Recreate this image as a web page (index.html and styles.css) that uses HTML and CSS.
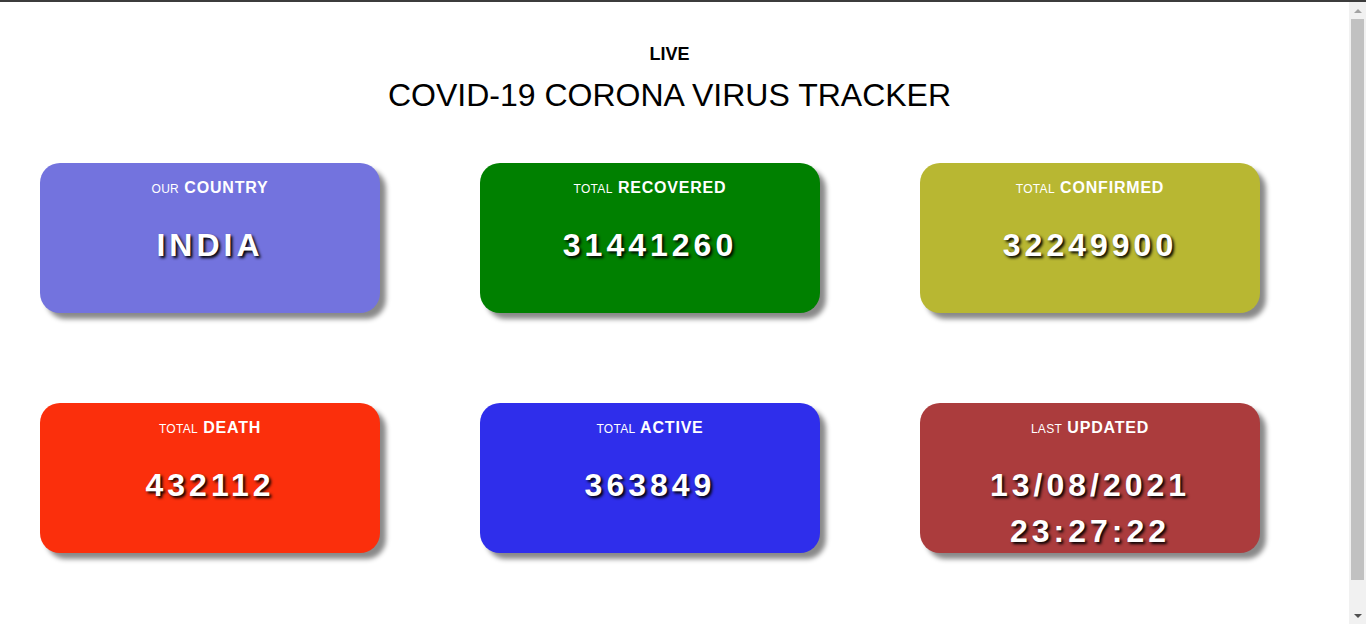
FILE: index.html
```html
<!DOCTYPE html>
<html lang="en">
<head>
<meta charset="utf-8">
<title>Covid-19 Corona Virus Tracker</title>
<link rel="stylesheet" href="styles.css">
</head>
<body>
<div class="page">
  <header class="header">
    <h3 class="live">LIVE</h3>
    <h1 class="title">COVID-19 CORONA VIRUS TRACKER</h1>
  </header>
  <main class="grid">
    <section class="card c-country">
      <p class="label"><span class="small">our</span> COUNTRY</p>
      <p class="value">INDIA</p>
    </section>
    <section class="card c-recovered">
      <p class="label"><span class="small">total</span> RECOVERED</p>
      <p class="value">31441260</p>
    </section>
    <section class="card c-confirmed">
      <p class="label"><span class="small">total</span> CONFIRMED</p>
      <p class="value">32249900</p>
    </section>
    <section class="card c-death">
      <p class="label"><span class="small">total</span> DEATH</p>
      <p class="value">432112</p>
    </section>
    <section class="card c-active">
      <p class="label"><span class="small">total</span> ACTIVE</p>
      <p class="value">363849</p>
    </section>
    <section class="card c-updated">
      <p class="label"><span class="small">last</span> UPDATED</p>
      <p class="value">13/08/2021<br>23:27:22</p>
    </section>
  </main>
</div>
<div class="scrollbar">
  <div class="sb-arrow sb-up"></div>
  <div class="sb-thumb"></div>
  <div class="sb-rest"></div>
  <div class="sb-arrow sb-down"></div>
</div>
</body>
</html>
```
FILE: styles.css
```css
html, body {
  margin: 0;
  padding: 0;
  height: 100%;
  overflow: hidden;
  background: #fff;
}
body {
  font-family: "Liberation Sans", Arial, sans-serif;
  color: #000;
  border-top: 2px solid #3c3c3c;
  box-sizing: border-box;
}
.page {
  width: 1349px;
}
.header {
  text-align: center;
  padding-right: 10px;
  padding-top: 42px;
}
.live {
  margin: 0;
  font-size: 18px;
  font-weight: bold;
  line-height: 21px;
}
.title {
  margin: 12px 0 0;
  font-size: 32px;
  font-weight: normal;
  line-height: 37px;
}
.grid {
  display: grid;
  grid-template-columns: repeat(3, 340px);
  column-gap: 100px;
  row-gap: 90px;
  padding-left: 40px;
  margin-top: 49px;
}
.card {
  height: 150px;
  border-radius: 20px;
  box-shadow: 6px 6px 5px #8a8a8a;
  color: #fff;
  text-align: center;
  box-sizing: border-box;
  padding-top: 16px;
}
.label {
  margin: 0;
  font-size: 16px;
  font-weight: bold;
  line-height: 18px;
  letter-spacing: 0.8px;
}
.small {
  font-size: 12px;
  text-transform: uppercase;
  font-weight: normal;
  letter-spacing: 0.3px;
}
.value {
  font-size: 32px;
  font-weight: bold;
  letter-spacing: 4px;
  line-height: 46px;
  margin: 24px 0 0;
  text-shadow: 2px 2px 3px #000;
}
.c-country { background: #7373de; }
.c-recovered { background: #008000; }
.c-confirmed { background: #b8b732; }
.c-death { background: #fb2f0c; }
.c-active { background: #2f2eeb; }
.c-updated { background: #ab3c3d; }

.scrollbar {
  position: fixed;
  top: 2px;
  right: 0;
  bottom: 0;
  width: 17px;
  background: #f1f1f1;
  display: flex;
  flex-direction: column;
}
.sb-arrow {
  height: 17px;
  display: flex;
  align-items: center;
  justify-content: center;
}
.sb-up::before {
  content: "";
  border-left: 4px solid transparent;
  border-right: 4px solid transparent;
  border-bottom: 4px solid #a3a3a3;
}
.sb-down::before {
  content: "";
  border-left: 4px solid transparent;
  border-right: 4px solid transparent;
  border-top: 4px solid #505050;
}
.sb-thumb {
  margin: 0 2px;
  height: 561px;
  background: #c1c1c1;
}
.sb-rest {
  flex: 1;
}
```
